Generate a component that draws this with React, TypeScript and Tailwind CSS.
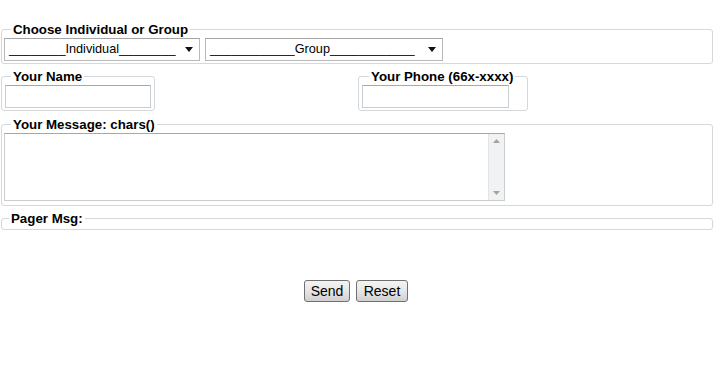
const font = { fontFamily: '"Liberation Sans", Arial, sans-serif' };

function Select({ width, label }: { width: string; label: string }) {
  return (
    <div
      className={`${width} h-[23px] flex items-center justify-between border border-[#b9b9b9] border-t-[#a5a5a5] bg-white pl-[4px] pr-[6px] text-[12.7px] text-black`}
    >
      <span className="whitespace-pre">{label}</span>
      <svg width="8" height="5" viewBox="0 0 8 5">
        <path d="M0 0h8L4 5z" fill="#111" />
      </svg>
    </div>
  );
}

function TextBox({ width }: { width: string }) {
  return <div className={`${width} h-[23px] border border-[#c9cdd0] border-t-[#a8a8a8] bg-white`} />;
}

export default function App() {
  return (
    <div className="w-[727px] h-[378px] bg-white text-black" style={font}>
      <div className="w-[712px] ml-[1px] pt-[22px]">
        {/* Individual / Group */}
        <fieldset className="border border-[#d3d8dc] rounded-[3px] px-[2px] pb-[2px]">
          <legend className="ml-[7px] px-[2px] text-[13.3px] font-bold leading-[15px]">
            Choose Individual or Group
          </legend>
          <div className="flex gap-[5px] mt-[1px]">
            <Select width="w-[196px]" label="________Individual________" />
            <Select width="w-[238px]" label="____________Group____________" />
          </div>
        </fieldset>

        {/* Name / Phone */}
        <div className="flex mt-[5px]">
          <div className="w-[357px]">
            <fieldset className="w-[154px] border border-[#d3d8dc] rounded-[3px] pl-[3px] pb-[2px]">
              <legend className="ml-[6px] px-[2px] text-[13.3px] font-bold leading-[15px]">Your Name</legend>
              <div className="mt-[1px]">
                <TextBox width="w-[146px]" />
              </div>
            </fieldset>
          </div>
          <fieldset className="w-[170px] border border-[#d3d8dc] rounded-[3px] pl-[3px] pb-[2px]">
            <legend className="ml-[7px] px-[2px] text-[13.3px] font-bold leading-[15px]">Your Phone (66x-xxxx)</legend>
            <div className="mt-[1px]">
              <TextBox width="w-[147px]" />
            </div>
          </fieldset>
        </div>

        {/* Message */}
        <fieldset className="mt-[6px] border border-[#d3d8dc] rounded-[3px] px-[2px] pb-[4px]">
          <legend className="ml-[7px] px-[2px] text-[13.3px] font-bold leading-[15px]">Your Message: chars()</legend>
          <div className="mt-[1px] w-[501px] h-[68px] flex border border-[#c9cdd0] border-t-[#a8a8a8] bg-white">
            <div className="flex-1" />
            <div className="w-[16px] h-full flex flex-col justify-between items-center bg-[#f1f2f3] border-l border-[#e2e4e6] py-[5px]">
              <svg width="7" height="4" viewBox="0 0 7 4">
                <path d="M3.5 0L7 4H0z" fill="#a3a3a3" />
              </svg>
              <svg width="7" height="4" viewBox="0 0 7 4">
                <path d="M0 0h7L3.5 4z" fill="#a3a3a3" />
              </svg>
            </div>
          </div>
        </fieldset>

        {/* Pager */}
        <fieldset className="mt-[5px] h-[19px] border border-[#d3d8dc] rounded-[3px]">
          <legend className="ml-[7px] px-[2px] text-[13.3px] font-bold leading-[15px]">Pager Msg:</legend>
        </fieldset>

        {/* Buttons */}
        <div className="mt-[50px] flex justify-center gap-[6px] pr-[2px]">
          <button className="w-[46px] h-[22px] border border-[#707070] rounded-[3px] bg-gradient-to-b from-[#f4f4f4] via-[#e6e6e6] to-[#d0d0d0] text-[14px] leading-none">
            Send
          </button>
          <button className="w-[52px] h-[22px] border border-[#707070] rounded-[3px] bg-gradient-to-b from-[#f4f4f4] via-[#e6e6e6] to-[#d0d0d0] text-[14px] leading-none">
            Reset
          </button>
        </div>
      </div>
    </div>
  );
}
